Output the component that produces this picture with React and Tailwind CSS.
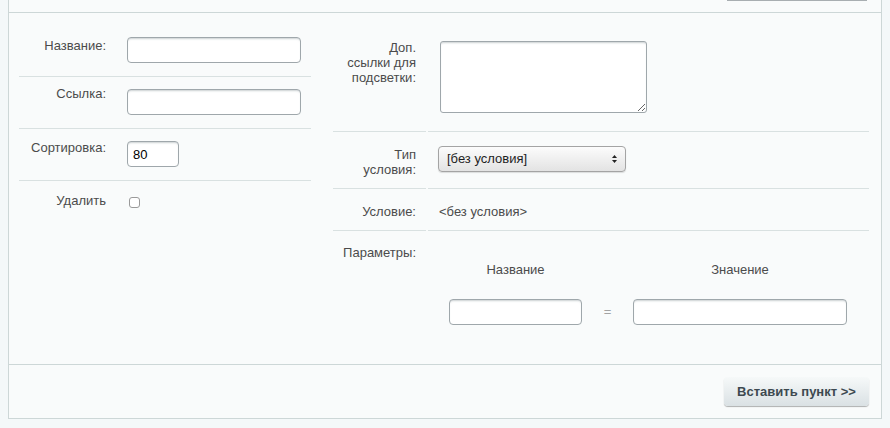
import React from "react";

const font = { fontFamily: '"Liberation Sans", Arial, Helvetica, sans-serif' };

// shared looks
const labelText = "text-[13px] leading-[16px] text-[#4b4b4b]";
const fieldBox =
  "h-[26px] rounded-[4px] border border-[#9fa7ab] bg-white px-[5px] text-[13px] text-black outline-none shadow-[inset_0_2px_2px_-1px_rgba(180,188,191,0.7)]";
const sep = "border-b border-[#d9e1e1]";

function LeftRow({ height, label, labelPad, fieldPad, children, last }) {
  return (
    <div className={`flex ${last ? "flex-1" : `${height} ${sep}`}`}>
      <div className={`w-[98px] pr-[11px] text-right ${labelText} ${labelPad}`}>{label}</div>
      <div className={`pl-[10px] ${fieldPad}`}>{children}</div>
    </div>
  );
}

function RightRow({ height, label, labelPad, valuePad, children, last }) {
  return (
    <div className={`flex ${last ? "flex-1" : height}`}>
      <div
        className={`w-[93px] pr-[10px] text-right text-[13px] leading-[15px] text-[#4b4b4b] ${labelPad} ${
          last ? "" : sep
        }`}
      >
        {label}
      </div>
      <div className={`ml-[2px] flex-1 ${valuePad} ${last ? "" : sep}`}>{children}</div>
    </div>
  );
}

function FakeSelect({ value }) {
  return (
    <div className="flex h-[26px] w-[188px] items-center justify-between rounded-[4px] border border-[#a4a4a4] bg-linear-to-b from-[#fcfcfc] to-[#e3e3e3] pl-[8px] pr-[8px] text-[13px] text-[#1e1e1e] shadow-[0_1px_1px_rgba(0,0,0,0.12)]">
      <span>{value}</span>
      <svg width="5" height="8" viewBox="0 0 5 8">
        <polygon points="0,3 2.5,0 5,3" fill="#222" />
        <polygon points="0,5 5,5 2.5,8" fill="#222" />
      </svg>
    </div>
  );
}

export default function App() {
  return (
    <div className="h-[428px] w-[890px] overflow-hidden bg-[#f4f8f9] px-[8px]" style={font}>
      <div className="flex flex-col border-x border-b border-[#cdd7d7] bg-[#f9fbfb]">
        {/* tail of the section above */}
        <div className="flex h-[13px] justify-end border-b border-[#cdd7d7] pr-[14px]">
          <div className="h-[1px] w-[140px] bg-[#a8aeb1]" />
        </div>

        {/* form body */}
        <div className="flex h-[351px]">
          {/* left table */}
          <div className="ml-[10px] flex w-[292px] flex-col">
            <LeftRow height="h-[64px]" label="Название:" labelPad="pt-[25px]" fieldPad="pt-[24px]">
              <input type="text" className={`${fieldBox} w-[174px]`} />
            </LeftRow>
            <LeftRow height="h-[52px]" label="Ссылка:" labelPad="pt-[9px]" fieldPad="pt-[12px]">
              <input type="text" className={`${fieldBox} w-[174px]`} />
            </LeftRow>
            <LeftRow height="h-[52px]" label="Сортировка:" labelPad="pt-[11px]" fieldPad="pt-[12px]">
              <input type="text" defaultValue="80" className={`${fieldBox} w-[52px]`} />
            </LeftRow>
            <LeftRow last label="Удалить" labelPad="pt-[12px]" fieldPad="pt-[16px] pl-[12px]">
              <input
                type="checkbox"
                className="block h-[11px] w-[11px] appearance-none rounded-[3px] border border-[#9a9a9a] bg-white"
              />
            </LeftRow>
          </div>

          {/* right table */}
          <div className="ml-[22px] flex w-[536px] flex-col">
            <RightRow
              height="h-[119px]"
              label={
                <>
                  Доп.
                  <br />
                  ссылки для
                  <br />
                  подсветки:
                </>
              }
              labelPad="pt-[27px]"
              valuePad="pl-[12px] pt-[28px]"
            >
              <textarea className="block h-[72px] w-[207px] rounded-[3px] border border-[#9fa7ab] bg-white outline-none shadow-[inset_0_2px_2px_-1px_rgba(180,188,191,0.7)]" />
            </RightRow>
            <RightRow
              height="h-[57px]"
              label={
                <>
                  Тип
                  <br />
                  условия:
                </>
              }
              labelPad="pt-[15px]"
              valuePad="pl-[10px] pt-[14px]"
            >
              <FakeSelect value="[без условия]" />
            </RightRow>
            <RightRow height="h-[42px]" label="Условие:" labelPad="pt-[15px] leading-[16px]" valuePad="pl-[11px] pt-[15px]">
              <div className={labelText}>&lt;без условия&gt;</div>
            </RightRow>
            <RightRow last label="Параметры:" labelPad="pt-[14px] leading-[16px]" valuePad="pl-[21px] pt-[31px]">
              <div className="flex">
                <div className="flex w-[133px] flex-col items-center">
                  <div className={labelText}>Название</div>
                </div>
                <div className="w-[51px]" />
                <div className="flex w-[214px] flex-col items-center">
                  <div className={labelText}>Значение</div>
                </div>
              </div>
              <div className="mt-[21px] flex items-center">
                <input type="text" className={`${fieldBox} w-[133px]`} />
                <div className="w-[51px] text-center text-[13px] text-[#a3a3a3]">=</div>
                <input type="text" className={`${fieldBox} w-[214px]`} />
              </div>
            </RightRow>
          </div>
        </div>

        {/* footer */}
        <div className="flex h-[54px] justify-end border-t border-[#cdd7d7] pr-[12px] pt-[12px]">
          <button className="h-[29px] w-[145px] rounded-[4px] bg-linear-to-b from-[#f6f9f9] to-[#dae1e4] text-[13px] font-bold text-[#3d4950] shadow-[0_1px_1px_rgba(0,0,0,0.3)]">
            Вставить пункт &gt;&gt;
          </button>
        </div>
      </div>
    </div>
  );
}
